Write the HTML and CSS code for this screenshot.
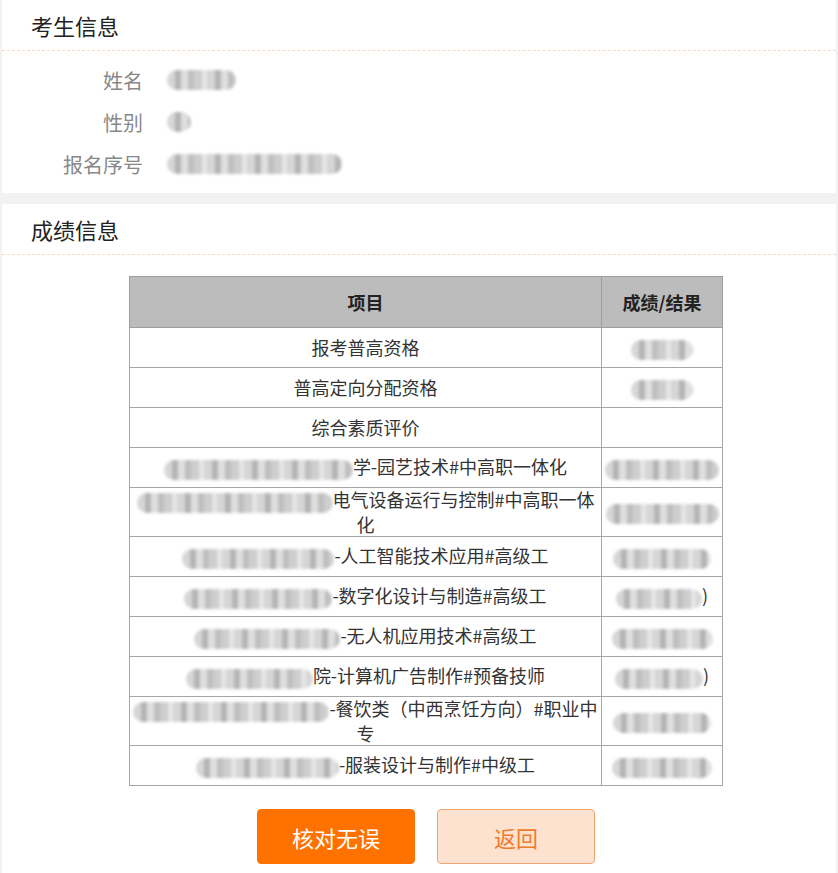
FILE: index.html
```html
<!DOCTYPE html>
<html lang="zh-CN">
<head>
  <meta charset="UTF-8" />
  <meta name="viewport" content="width=device-width, initial-scale=1" />
  <title>成绩确认</title>
  <link rel="stylesheet" href="styles.css">
</head>
<body>

  <!-- 考生信息 -->
  <section class="panel">
    <h2 class="panel-title">考生信息</h2>
    <div class="info">
      <div class="info-row">
        <span class="info-label">姓名</span>
        <span class="blur" style="width:69px"></span>
      </div>
      <div class="info-row">
        <span class="info-label">性别</span>
        <span class="blur" style="width:24px"></span>
      </div>
      <div class="info-row">
        <span class="info-label">报名序号</span>
        <span class="blur" style="width:175px"></span>
      </div>
    </div>
  </section>

  <!-- 成绩信息 -->
  <section class="panel">
    <h2 class="panel-title">成绩信息</h2>
    <div class="score">
      <table class="score-table">
        <colgroup>
          <col>
          <col class="col-result">
        </colgroup>
        <thead>
          <tr>
            <th>项目</th>
            <th>成绩/结果</th>
          </tr>
        </thead>
        <tbody>
          <tr>
            <td>报考普高资格</td>
            <td><span class="blur" style="width:62px"></span></td>
          </tr>
          <tr>
            <td>普高定向分配资格</td>
            <td><span class="blur" style="width:62px"></span></td>
          </tr>
          <tr>
            <td>综合素质评价</td>
            <td></td>
          </tr>
          <tr>
            <td><span class="blur" style="width:189px"></span>学-园艺技术#中高职一体化</td>
            <td><span class="blur" style="width:114px"></span></td>
          </tr>
          <tr class="tall">
            <td><span class="blur" style="width:196px"></span>电气设备运行与控制#中高职一体化</td>
            <td><span class="blur" style="width:113px"></span></td>
          </tr>
          <tr>
            <td><span class="blur" style="width:152px"></span>-人工智能技术应用#高级工</td>
            <td><span class="blur" style="width:98px"></span></td>
          </tr>
          <tr>
            <td><span class="blur" style="width:148px"></span>-数字化设计与制造#高级工</td>
            <td><span class="blur" style="width:86px"></span>)</td>
          </tr>
          <tr>
            <td><span class="blur" style="width:146px"></span>-无人机应用技术#高级工</td>
            <td><span class="blur" style="width:101px"></span></td>
          </tr>
          <tr>
            <td><span class="blur" style="width:127px"></span>院-计算机广告制作#预备技师</td>
            <td><span class="blur" style="width:88px"></span>)</td>
          </tr>
          <tr class="tall">
            <td><span class="blur" style="width:196px"></span>-餐饮类（中西烹饪方向）#职业中专</td>
            <td><span class="blur" style="width:98px"></span></td>
          </tr>
          <tr>
            <td><span class="blur" style="width:143px"></span>-服装设计与制作#中级工</td>
            <td><span class="blur" style="width:100px"></span></td>
          </tr>
        </tbody>
      </table>

      <div class="actions">
        <button class="btn btn-primary">核对无误</button>
        <button class="btn btn-light">返回</button>
      </div>
    </div>
  </section>

</body>
</html>
```

FILE: styles.css
```css
/* Reset */
* {
  margin: 0; padding: 0; box-sizing: border-box;
  font-family: "Noto Sans CJK SC", "Liberation Sans", sans-serif;
}

body {
  background: #f2f2f2;
  color: #333;
  padding: 0 2px;
}

/* Panels */
.panel {
  background: #fff;
  margin-bottom: 11px;
}
.panel-title {
  height: 51px;
  line-height: 50px;
  padding-left: 29px;
  font-size: 22px;
  font-weight: 400;
  color: #222;
  border-bottom: 1px dashed #f6d9c6;
}

/* Candidate info */
.info {
  padding: 8px 0;
}
.info-row {
  display: grid;
  grid-template-columns: 80px 1fr;
  column-gap: 24px;
  align-items: center;
  height: 42px;
  padding-left: 61px;
}
.info-label {
  text-align: right;
  font-size: 20px;
  color: #888;
}

/* Redacted values */
.blur {
  display: inline-block;
  height: 20px;
  vertical-align: middle;
  border-radius: 10px;
  background:
    repeating-linear-gradient(90deg,
      #cfcfcf 0 8px, #a8a8a8 8px 14px, #dadada 14px 21px,
      #b4b4b4 21px 27px, #c6c6c6 27px 35px, #e2e2e2 35px 40px);
  filter: blur(1.4px);
  opacity: 0.85;
}

/* Score table */
.score {
  padding: 21px 0 10px 14px;
}
.score-table {
  width: 594px;
  margin: 0 auto;
  border-collapse: collapse;
  table-layout: fixed;
  font-size: 18px;
  line-height: 23px;
  border: 1px solid #9e9e9e;
}
.score-table .col-result {
  width: 121px;
}
.score-table th {
  height: 51px;
  background: #bdbcbc;
  color: #222;
  font-weight: 700;
  border: 1px solid #9e9e9e;
}
.score-table td {
  height: 40px;
  padding: 0 2px;
  text-align: center;
  vertical-align: middle;
  color: #333;
  border: 1px solid #a6a6a6;
}
.score-table tr.tall td {
  height: 49px;
}

/* Buttons */
.actions {
  display: flex;
  justify-content: center;
  gap: 22px;
  margin-top: 23px;
}
.btn {
  width: 158px;
  height: 55px;
  border-radius: 4px;
  font-size: 22px;
  cursor: pointer;
}
.btn-primary {
  background: #ff7200;
  color: #fff;
  border: 1px solid #ff7200;
}
.btn-light {
  background: #fde3cf;
  color: #f07a2c;
  border: 1px solid #f2a574;
}
```
